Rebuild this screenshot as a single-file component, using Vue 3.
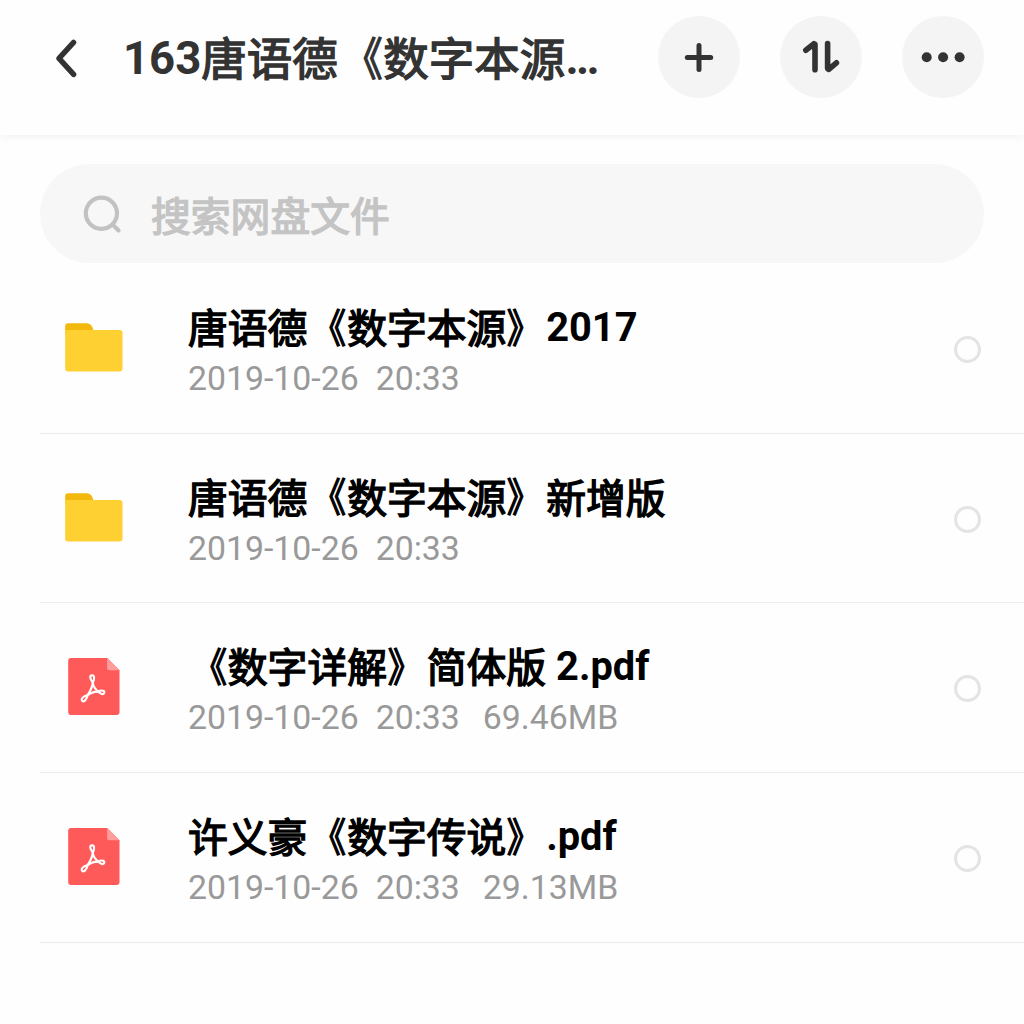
<script setup>
// Splits a label into Chinese, bracket and Latin runs so each gets its own shape and weight.
const kind = (t) => (t === '《' ? 'cjk open' : t === '》' ? 'cjk close' : t.charCodeAt(0) > 127 ? 'cjk' : '')
const runs = (text) =>
  text.split(/([\u0020-\u007e]+|《|》)/).filter(Boolean).map((t) => ({ text: t, kind: kind(t) }))

const files = [
  { name: '唐语德《数字本源》2017', type: 'folder', date: '2019-10-26', time: '20:33' },
  { name: '唐语德《数字本源》新增版', type: 'folder', date: '2019-10-26', time: '20:33' },
  { name: '《数字详解》简体版 2.pdf', type: 'pdf', date: '2019-10-26', time: '20:33', size: '69.46MB' },
  { name: '许义豪《数字传说》.pdf', type: 'pdf', date: '2019-10-26', time: '20:33', size: '29.13MB' },
]
</script>

<template>
  <div class="page">
    <header class="topbar">
      <svg class="back" width="24" height="40" viewBox="0 0 24 40">
        <path d="M19.6 4.4 5 20.4 19.6 36.4" fill="none" stroke="#333" stroke-width="5.4" stroke-linecap="round" stroke-linejoin="round" />
      </svg>
      <h1 class="title"><span v-for="(run, i) in runs('163唐语德《数字本源')" :key="i" :class="run.kind">{{ run.text }}</span><span class="dots">...</span></h1>
      <div class="actions">
        <button class="round">
          <svg width="82" height="82" viewBox="0 0 82 82" fill="none" stroke="#333" stroke-width="5" stroke-linecap="round">
            <path d="M29.3 41.6H52.7M41 29.6V53.4" />
          </svg>
        </button>
        <button class="round">
          <svg width="82" height="82" viewBox="0 0 82 82" fill="none" stroke="#333" stroke-width="5.6" stroke-linecap="round" stroke-linejoin="round">
            <path d="M25.8 34.2 34 27.7 35 28.2V53.7M47.6 27.6V52.6L48.8 53.4 56.4 46.8" />
            <path d="M32 31.5 35 29V36ZM47.6 52V46L51 49.5Z" fill="#333" stroke-width="1" />
          </svg>
        </button>
        <button class="round">
          <svg width="82" height="82" viewBox="0 0 82 82" fill="#333">
            <circle cx="24.7" cy="41.2" r="5" />
            <circle cx="41.1" cy="41.2" r="5" />
            <circle cx="57.6" cy="41.2" r="5" />
          </svg>
        </button>
      </div>
    </header>

    <div class="search">
      <svg width="40" height="40" viewBox="0 0 40 40" fill="none" stroke="#c2c2c2" stroke-width="4.2" stroke-linecap="round">
        <circle cx="18.4" cy="19.2" r="15.6" />
        <path d="M30 31 35.6 36.4" />
      </svg>
      <span class="hint cjk">搜索网盘文件</span>
    </div>

    <ul class="list">
      <li v-for="file in files" :key="file.name" class="row">
        <div class="icon">
          <svg v-if="file.type === 'folder'" width="58" height="50" viewBox="0 0 58 50">
            <path d="M.2 12V3.2Q.2 .2 3.2 .2H22Q25 .2 26.8 3L28.5 7.2V12Z" fill="#f2b90c" />
            <path d="M.2 7H54.5Q57.5 7 57.5 10V45.5Q57.5 48.5 54.5 48.5H3.2Q.2 48.5 .2 45.5Z" fill="#ffd031" />
          </svg>
          <svg v-else width="52" height="58" viewBox="0 0 52 58">
            <path d="M3 0H39.3L51.5 12.2V54Q51.5 57 48.5 57H3Q.2 57 .2 54V3Q.2 0 3 0Z" fill="#ff5a5a" />
            <path d="M39.1 0 51.5 12.2H41.1Q39.1 12.2 39.1 10.2Z" fill="#ff9c9c" />
            <g fill="none" stroke="#fff" stroke-width="2.1" stroke-linejoin="round" stroke-linecap="round">
              <path d="M24.6 24.2C22 21 21.3 17.4 24 17.2C26.6 17.2 26.6 20.6 25 24.2" />
              <path d="M30.6 33.2C34.4 31.7 36.8 33.1 36.2 35C35.6 37 32.6 36 30 33.6" />
              <path d="M19.2 37.2C15.2 37.8 12.7 41.2 14.2 42.9C16.2 44.7 18.4 41 19.6 37.6" />
              <path d="M24.6 24.2C25.2 28.4 27.2 31.4 30.4 33.6C26.4 33.4 22.8 34.6 19.2 37.4C22.2 33.6 24.4 29.4 24.8 24.2" />
            </g>
          </svg>
        </div>
        <div class="info">
          <div class="name"><span v-for="(run, i) in runs(file.name)" :key="i" :class="run.kind">{{ run.text }}</span></div>
          <div class="meta">
            <span class="date">{{ file.date }}</span>
            <span class="time">{{ file.time }}</span>
            <span v-if="file.size">{{ file.size }}</span>
          </div>
        </div>
        <span class="check"></span>
      </li>
    </ul>
  </div>
</template>

<style>
body {
  margin: 0;
  background: #fefefe;
}
</style>

<style scoped>
.page {
  width: 1024px;
  height: 1024px;
  overflow: hidden;
  background: #fefefe;
  font-family: Roboto, "Noto Sans CJK SC", sans-serif;
}
.cjk {
  font-weight: 400;
  line-height: 1;
  vertical-align: -1.5px;
  -webkit-text-stroke: 1.4px currentColor;
}
.open,
.close {
  display: inline-block;
  transform: scaleX(0.86);
}
.open {
  transform-origin: 85% 50%;
}
.close {
  transform-origin: 15% 50%;
}
.topbar {
  display: flex;
  align-items: flex-start;
  box-sizing: border-box;
  height: 135px;
  padding: 16px 40px 0 54px;
  background: #fefefe;
  box-shadow: 0 2px 8px rgba(0, 0, 0, 0.05);
}
.back {
  flex: none;
  margin-top: 22px;
}
.title {
  flex: 1;
  margin: 12px 0 0 45px;
  font-size: 45.5px;
  line-height: 62px;
  font-weight: 700;
  color: #333;
  white-space: nowrap;
}
.dots {
  letter-spacing: -2.6px;
}
.actions {
  display: flex;
  gap: 40px;
}
.round {
  width: 82px;
  height: 82px;
  padding: 0;
  border: 0;
  border-radius: 50%;
  background: #f4f4f4;
}
.round svg {
  display: block;
}
.search {
  display: flex;
  align-items: center;
  box-sizing: border-box;
  height: 99px;
  margin: 29px 40px 0;
  padding-left: 43px;
  border-radius: 50px;
  background: #f7f7f7;
}
.hint {
  margin: 8px 0 0 28px;
  font-size: 39.8px;
  color: #c4c4c4;
}
.list {
  margin: 1px 0 0 40px;
  padding: 0;
  list-style: none;
}
.row {
  display: flex;
  box-sizing: border-box;
  height: 169.7px;
  padding-right: 43px;
  border-bottom: 1.5px solid #ececec;
}
.icon {
  display: flex;
  align-items: center;
  justify-content: center;
  width: 108px;
  height: 168px;
}
.info {
  flex: 1;
  padding: 36px 0 0 40px;
}
.name {
  height: 57px;
  font-size: 39.8px;
  line-height: 56px;
  font-weight: 700;
  color: #000;
  white-space: pre;
}
.meta {
  display: flex;
  font-size: 33.8px;
  line-height: 44px;
  color: #999;
}
.date {
  margin-right: 17px;
}
.time {
  margin-right: 23px;
}
.check {
  box-sizing: border-box;
  width: 27px;
  height: 27px;
  margin-top: 72px;
  border: 3px solid #e4e4e4;
  border-radius: 50%;
}
</style>
